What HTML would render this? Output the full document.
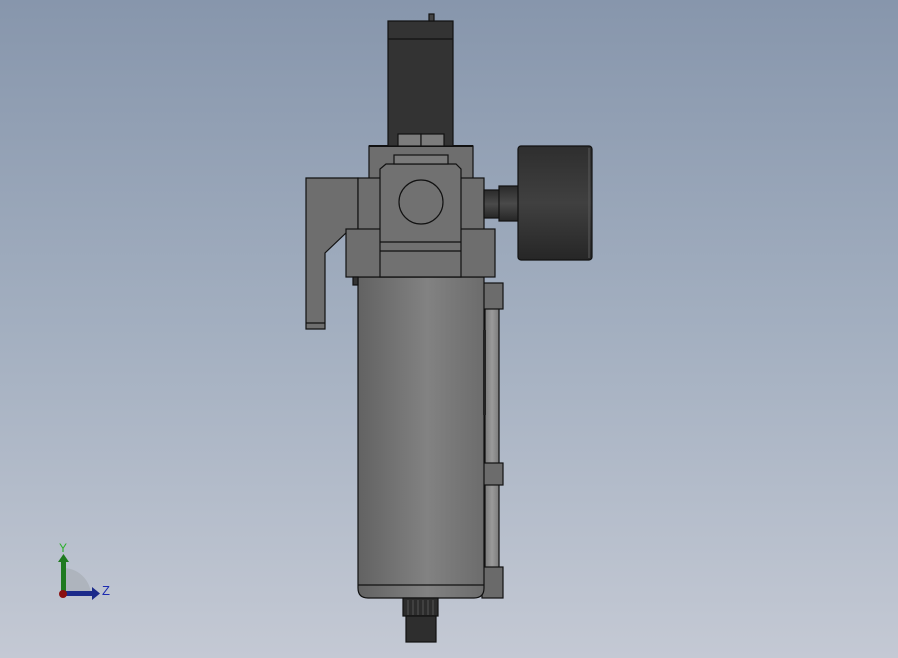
<!DOCTYPE html>
<html><head><style>
html,body{margin:0;padding:0}
body{width:898px;height:658px;overflow:hidden;background:linear-gradient(#8796ac 0%,#a3afc0 50%,#c4c9d4 100%)}
svg{position:absolute;left:0;top:0}
</style></head><body>
<svg width="898" height="658" viewBox="0 0 898 658" xmlns="http://www.w3.org/2000/svg">
<defs>
<linearGradient id="bowl" x1="0" x2="1"><stop offset="0" stop-color="#626262"/><stop offset="0.55" stop-color="#828282"/><stop offset="1" stop-color="#6c6c6c"/></linearGradient>
<linearGradient id="gauge" x1="0" y1="0" x2="0" y2="1"><stop offset="0" stop-color="#2e2e2e"/><stop offset="0.5" stop-color="#404040"/><stop offset="1" stop-color="#262626"/></linearGradient>
<linearGradient id="stem" x1="0" y1="0" x2="0" y2="1"><stop offset="0" stop-color="#2a2a2a"/><stop offset="0.5" stop-color="#4a4a4a"/><stop offset="1" stop-color="#262626"/></linearGradient>
<linearGradient id="rod" x1="0" x2="1"><stop offset="0" stop-color="#7a7a7a"/><stop offset="0.5" stop-color="#9a9a9a"/><stop offset="1" stop-color="#7c7c7c"/></linearGradient>
</defs>
<g stroke="#111" stroke-width="1.2">
<!-- right rod -->
<rect x="485" y="300" width="14" height="275" fill="url(#rod)"/>
<rect x="482" y="283" width="21" height="26" fill="#6c6c6c"/>
<rect x="482" y="463" width="21" height="22" fill="#6c6c6c"/>
<rect x="482" y="567" width="21" height="31" fill="#6a6a6a"/>
<!-- bowl -->
<path d="M358 277 H484 V588 Q484 598 474 598 H368 Q358 598 358 588 Z" fill="url(#bowl)"/>
<line x1="358" y1="585" x2="484" y2="585"/>
<rect x="483" y="330" width="3" height="85" fill="#222" stroke="none"/>
<!-- drain -->
<rect x="403" y="598" width="35" height="18" fill="#2c2c2c"/>
<g stroke="#555" stroke-width="1"><line x1="408" y1="600" x2="408" y2="615"/><line x1="413" y1="600" x2="413" y2="615"/><line x1="418" y1="600" x2="418" y2="615"/><line x1="423" y1="600" x2="423" y2="615"/><line x1="428" y1="600" x2="428" y2="615"/><line x1="433" y1="600" x2="433" y2="615"/></g>
<rect x="406" y="616" width="30" height="26" fill="#2e2e2e"/>
<!-- left bracket -->
<path d="M306 178 H358 V233 L346 233 L325 253 V329 H306 Z" fill="#6e6e6e"/>
<line x1="306" y1="323" x2="325" y2="323"/>
<!-- upper block -->
<rect x="369" y="146" width="104" height="35" fill="#6e6e6e"/>
<line x1="369" y1="146" x2="473" y2="146" stroke-width="2"/>
<!-- side blocks -->
<rect x="358" y="178" width="126" height="52" fill="#6e6e6e"/>
<!-- stem -->
<rect x="484" y="190" width="16" height="28" fill="url(#stem)"/>
<rect x="499" y="186" width="20" height="35" fill="url(#stem)"/>
<!-- gauge -->
<rect x="518" y="146" width="74" height="114" rx="3" fill="url(#gauge)"/>
<line x1="589" y1="148" x2="589" y2="258" stroke="#555"/>
<!-- lower wide block -->
<rect x="346" y="229" width="149" height="48" fill="#6e6e6e"/>
<rect x="353" y="277" width="5" height="8" fill="#333"/>
<!-- center block -->
<path d="M386 164 H456 L461 169 V277 H380 V169 Z" fill="#717171"/>
<rect x="394" y="155" width="54" height="9" fill="#7a7a7a"/>
<line x1="380" y1="242" x2="461" y2="242"/>
<line x1="380" y1="251" x2="461" y2="251"/>
<circle cx="421" cy="202" r="22" fill="#717171"/>
<!-- solenoid -->
<rect x="388" y="21" width="65" height="125" fill="#333"/>
<line x1="388" y1="39" x2="453" y2="39"/>
<rect x="429" y="14" width="5" height="7" fill="#444"/>
<rect x="398" y="134" width="23" height="12" fill="#7c7c7c"/>
<rect x="421" y="134" width="23" height="12" fill="#7c7c7c"/>
</g>
<!-- triad -->
<path d="M63 594 V568 A28 28 0 0 1 91 594 Z" fill="#aab0b8" opacity="0.8"/>
<rect x="61" y="560" width="5" height="34" fill="#1f7a1f"/>
<path d="M58 562 L63.5 554 L69 562 Z" fill="#1f7a1f"/>
<rect x="63" y="591" width="30" height="5" fill="#1b2a8a"/>
<path d="M92 587 L100 593.5 L92 600 Z" fill="#1b2a8a"/>
<circle cx="63" cy="594" r="4" fill="#8a1010"/>
<text x="59" y="552" font-family="Liberation Sans, sans-serif" font-size="12" fill="#2ab02a">Y</text>
<text x="102" y="595" font-family="Liberation Sans, sans-serif" font-size="13" fill="#1b2ab0">Z</text>
</svg>
</body></html>
